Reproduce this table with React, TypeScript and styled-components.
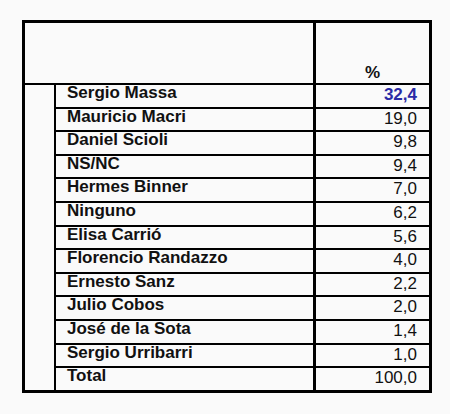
import React from "react";
import styled, { createGlobalStyle } from "styled-components";

const Global = createGlobalStyle`
  html, body { margin: 0; padding: 0; background: #fafafa; }
  body { font-family: "Liberation Sans", Arial, sans-serif; color: #111; }
`;

const Page = styled.div`
  width: 450px;
  height: 414px;
  padding: 20px 0 0 22px;
  box-sizing: border-box;
`;

const Frame = styled.div`
  width: 410px;
  box-sizing: border-box;
  border: 3px solid #000;
  display: flex;
  flex-direction: column;
`;

const Header = styled.div`
  display: flex;
  height: 62px;
  border-bottom: 2px solid #000;
  box-sizing: border-box;
`;

const BlankHead = styled.div`
  flex: 1;
  border-right: 3px solid #000;
`;

const PercentHead = styled.div`
  width: 113px;
  display: flex;
  align-items: flex-end;
  justify-content: center;
  padding-bottom: 2px;
  font-size: 17px;
  line-height: 16px;
  font-weight: bold;
`;

const Body = styled.div`
  display: flex;
`;

const Gutter = styled.div`
  width: 31px;
  box-sizing: border-box;
  border-right: 2px solid #000;
`;

const Rows = styled.div`
  flex: 1;
  display: flex;
  flex-direction: column;
`;

const Row = styled.div<{ $last?: boolean }>`
  display: flex;
  height: ${(p) => (p.$last ? "21.6px" : "23.6px")};
  box-sizing: border-box;
  border-bottom: ${(p) => (p.$last ? "none" : "2px solid #000")};
`;

const NameCell = styled.div`
  flex: 1;
  border-right: 3px solid #000;
  padding: 0 0 0 11px;
  font-size: 17px;
  line-height: 16px;
  font-weight: bold;
  white-space: nowrap;
`;

const ValueCell = styled.div<{ $highlight?: boolean }>`
  width: 113px;
  box-sizing: border-box;
  padding: 2px 12px 0 0;
  text-align: right;
  font-size: 17px;
  line-height: 16px;
  font-weight: ${(p) => (p.$highlight ? "bold" : "normal")};
  color: ${(p) => (p.$highlight ? "#2a2aa6" : "#111")};
`;

const data: [string, string][] = [
  ["Sergio Massa", "32,4"],
  ["Mauricio Macri", "19,0"],
  ["Daniel Scioli", "9,8"],
  ["NS/NC", "9,4"],
  ["Hermes Binner", "7,0"],
  ["Ninguno", "6,2"],
  ["Elisa Carrió", "5,6"],
  ["Florencio Randazzo", "4,0"],
  ["Ernesto Sanz", "2,2"],
  ["Julio Cobos", "2,0"],
  ["José de la Sota", "1,4"],
  ["Sergio Urribarri", "1,0"],
  ["Total", "100,0"],
];

export default function App() {
  return (
    <Page>
      <Global />
      <Frame>
        <Header>
          <BlankHead />
          <PercentHead>%</PercentHead>
        </Header>
        <Body>
          <Gutter />
          <Rows>
            {data.map(([name, value], i) => (
              <Row key={name} $last={i === data.length - 1}>
                <NameCell>{name}</NameCell>
                <ValueCell $highlight={i === 0}>{value}</ValueCell>
              </Row>
            ))}
          </Rows>
        </Body>
      </Frame>
    </Page>
  );
}
